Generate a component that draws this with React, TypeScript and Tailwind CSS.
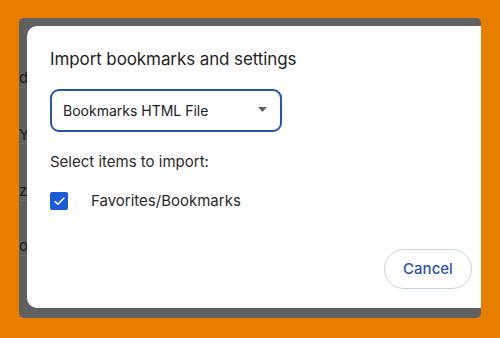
import { Check } from 'lucide-react';

const ghostRows = [
    { ch: 'd', top: 52 },
    { ch: 'Y', top: 109 },
    { ch: 'z', top: 165 },
    { ch: 'o', top: 220 },
];

const ghostLines = [69, 125, 182, 237];

export default function App() {
    return (
        <div className="w-[500px] h-[338px] bg-[#e67e00] overflow-hidden pt-[18px] pl-[19px]" style={{ fontFamily: 'Inter, "Noto Sans", sans-serif' }}>
            <div className="relative w-[462px] h-[300px] bg-[#606060] rounded-[5px] pt-2 pl-2 overflow-hidden">
                {/* page behind the dialog */}
                {ghostRows.map((g) => (
                    <span key={g.ch} className="absolute left-0 text-[15px] leading-4 text-[#1c1c1c]" style={{ top: g.top }}>
                        {g.ch}
                    </span>
                ))}
                {ghostLines.map((y) => (
                    <div key={y} className="absolute left-0 w-2 h-px bg-[#6c6c6c]" style={{ top: y }} />
                ))}

                <div className="relative w-[454px] h-[282px] bg-white rounded-l-[10px] pl-[23px] pt-[21px]">
                    <h2 className="text-[17px] leading-6 text-[#1f1f1f] tracking-[-0.1px]">Import bookmarks and settings</h2>

                    <div className="mt-[18px] w-[232px] h-[43px] border-2 border-[#2b52a6] rounded-[9px] flex items-center pl-[11px] pr-[13px]">
                        <span className="flex-1 text-[14px] text-[#202124]">Bookmarks HTML File</span>
                        <svg width="9" height="5" viewBox="0 0 9 5" className="mt-[-2px]">
                            <path d="M0 0h9L4.5 5z" fill="#5f6368" />
                        </svg>
                    </div>

                    <p className="mt-[20px] text-[15px] leading-5 text-[#2a2a2a]">Select items to import:</p>

                    <div className="mt-[19px] flex items-center h-5">
                        <div className="w-[18px] h-[18px] rounded-[2px] bg-[#1b5bd3] flex items-center justify-center">
                            <Check className="w-[13px] h-[13px] text-white" strokeWidth={3} />
                        </div>
                        <span className="ml-[23px] text-[15px] text-[#2a2a2a]">Favorites/Bookmarks</span>
                    </div>

                    <div className="absolute right-[9px] bottom-[19px]">
                        <button className="w-[88px] h-[40px] rounded-full border border-[#c9d3e2] bg-white text-[15px] font-medium text-[#2b52a3]">
                            Cancel
                        </button>
                    </div>
                </div>
            </div>
        </div>
    );
}
